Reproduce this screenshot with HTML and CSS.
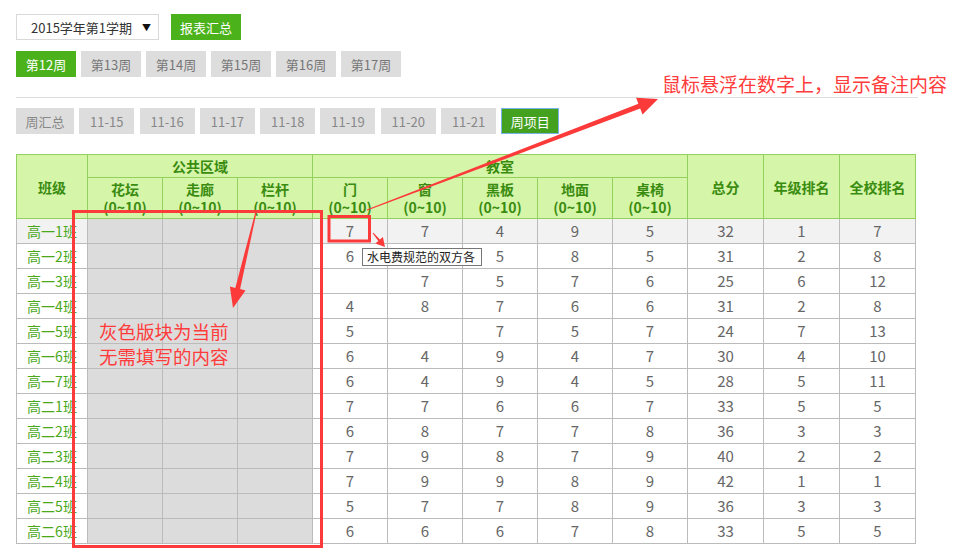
FILE: index.html
```html
<!DOCTYPE html>
<html lang="zh-CN">
<head>
<meta charset="utf-8">
<title>周项目</title>
<link rel="stylesheet" href="styles.css">
</head>
<body>
<div class="page">
  <div class="toolbar">
    <div class="select"><span>2015学年第1学期</span><span class="caret">▼</span></div>
    <button class="btn">报表汇总</button>
  </div>
  <div class="tabs weeks">
    <span class="tab active">第12周</span>
    <span class="tab">第13周</span>
    <span class="tab">第14周</span>
    <span class="tab">第15周</span>
    <span class="tab">第16周</span>
    <span class="tab">第17周</span>
  </div>
  <div class="divider"></div>
  <div class="tabs days">
    <span class="tab wide">周汇总</span>
    <span class="tab">11-15</span>
    <span class="tab">11-16</span>
    <span class="tab">11-17</span>
    <span class="tab">11-18</span>
    <span class="tab">11-19</span>
    <span class="tab">11-20</span>
    <span class="tab">11-21</span>
    <span class="tab wide current">周项目</span>
  </div>

  <table class="score">
    <colgroup>
      <col class="c-name">
      <col><col><col><col><col><col><col><col>
      <col class="c-sum"><col class="c-sum"><col class="c-sum">
    </colgroup>
    <thead>
      <tr class="h1">
        <th rowspan="2">班级</th>
        <th colspan="3">公共区域</th>
        <th colspan="5">教室</th>
        <th rowspan="2">总分</th>
        <th rowspan="2">年级排名</th>
        <th rowspan="2">全校排名</th>
      </tr>
      <tr class="h2">
        <th>花坛<br>(0~10)</th>
        <th>走廊<br>(0~10)</th>
        <th>栏杆<br>(0~10)</th>
        <th>门<br>(0~10)</th>
        <th>窗<br>(0~10)</th>
        <th>黑板<br>(0~10)</th>
        <th>地面<br>(0~10)</th>
        <th>桌椅<br>(0~10)</th>
      </tr>
    </thead>
    <tbody>
      <tr class="hover"><td class="name">高一1班</td><td class="off"></td><td class="off"></td><td class="off"></td><td>7</td><td>7</td><td>4</td><td>9</td><td>5</td><td>32</td><td>1</td><td>7</td></tr>
      <tr><td class="name">高一2班</td><td class="off"></td><td class="off"></td><td class="off"></td><td>6</td><td>7</td><td>5</td><td>8</td><td>5</td><td>31</td><td>2</td><td>8</td></tr>
      <tr><td class="name">高一3班</td><td class="off"></td><td class="off"></td><td class="off"></td><td></td><td>7</td><td>5</td><td>7</td><td>6</td><td>25</td><td>6</td><td>12</td></tr>
      <tr><td class="name">高一4班</td><td class="off"></td><td class="off"></td><td class="off"></td><td>4</td><td>8</td><td>7</td><td>6</td><td>6</td><td>31</td><td>2</td><td>8</td></tr>
      <tr><td class="name">高一5班</td><td class="off"></td><td class="off"></td><td class="off"></td><td>5</td><td></td><td>7</td><td>5</td><td>7</td><td>24</td><td>7</td><td>13</td></tr>
      <tr><td class="name">高一6班</td><td class="off"></td><td class="off"></td><td class="off"></td><td>6</td><td>4</td><td>9</td><td>4</td><td>7</td><td>30</td><td>4</td><td>10</td></tr>
      <tr><td class="name">高一7班</td><td class="off"></td><td class="off"></td><td class="off"></td><td>6</td><td>4</td><td>9</td><td>4</td><td>5</td><td>28</td><td>5</td><td>11</td></tr>
      <tr><td class="name">高二1班</td><td class="off"></td><td class="off"></td><td class="off"></td><td>7</td><td>7</td><td>6</td><td>6</td><td>7</td><td>33</td><td>5</td><td>5</td></tr>
      <tr><td class="name">高二2班</td><td class="off"></td><td class="off"></td><td class="off"></td><td>6</td><td>8</td><td>7</td><td>7</td><td>8</td><td>36</td><td>3</td><td>3</td></tr>
      <tr><td class="name">高二3班</td><td class="off"></td><td class="off"></td><td class="off"></td><td>7</td><td>9</td><td>8</td><td>7</td><td>9</td><td>40</td><td>2</td><td>2</td></tr>
      <tr><td class="name">高二4班</td><td class="off"></td><td class="off"></td><td class="off"></td><td>7</td><td>9</td><td>9</td><td>8</td><td>9</td><td>42</td><td>1</td><td>1</td></tr>
      <tr><td class="name">高二5班</td><td class="off"></td><td class="off"></td><td class="off"></td><td>5</td><td>7</td><td>7</td><td>8</td><td>9</td><td>36</td><td>3</td><td>3</td></tr>
      <tr><td class="name">高二6班</td><td class="off"></td><td class="off"></td><td class="off"></td><td>6</td><td>6</td><td>6</td><td>7</td><td>8</td><td>33</td><td>5</td><td>5</td></tr>
    </tbody>
  </table>

  <div class="tooltip">水电费规范的双方各</div>

  <svg class="marks" width="973" height="553" viewBox="0 0 973 553" aria-hidden="true">
    <rect x="73.5" y="211.5" width="248" height="335" fill="none" stroke="#fc3a3a" stroke-width="3"/>
    <rect x="329" y="216.5" width="40.5" height="24.5" fill="none" stroke="#fc3a3a" stroke-width="3"/>
    <polygon fill="#fc3a3a" points="367.2,210.6 640.2,108.4 642.5,114.5 658,99 636.1,97.7 638.4,103.8 366.8,209.4"/>
    <polygon fill="#fc3a3a" points="256.6,212.1 240.1,289.1 245.5,290.4 233,308 229.9,286.6 235.3,287.9 255.4,211.9"/>
    <polygon fill="#fc3a3a" points="373.4,232.7 379.9,239.5 382.9,236.9 385,247 375.3,243.5 378.3,240.9 372.6,233.3"/>
  </svg>

  <div class="note note-hover">鼠标悬浮在数字上，显示备注内容</div>
  <div class="note note-gray">灰色版块为当前<br>无需填写的内容</div>
</div>
</body>
</html>
```

FILE: styles.css
```css
html, body {
  margin: 0;
  padding: 0;
  background: #fff;
}

body {
  font-family: "Noto Sans CJK SC", "Noto Sans", sans-serif;
  width: 973px;
  height: 553px;
  overflow: hidden;
}

.page {
  position: relative;
  padding: 14px 16px 0;
  height: 553px;
  box-sizing: border-box;
}

.toolbar {
  display: flex;
  gap: 12px;
  height: 26px;
}

.select {
  width: 143px;
  height: 26px;
  box-sizing: border-box;
  border: 1px solid #d9d9d9;
  display: flex;
  align-items: center;
  justify-content: space-between;
  padding: 0 7px 0 14px;
  font-size: 13px;
  line-height: 1;
  color: #333;
}

.caret {
  font-size: 9px;
  color: #111;
}

.btn {
  width: 70px;
  height: 26px;
  border: 0;
  padding: 0;
  background: #4cb21c;
  color: #fff;
  font-family: inherit;
  font-size: 13px;
  line-height: 1;
}

.tabs {
  display: flex;
}

.weeks {
  margin-top: 11px;
  gap: 5px;
}

.tab {
  height: 26px;
  box-sizing: border-box;
  display: flex;
  align-items: center;
  justify-content: center;
  background: #dddddd;
  color: #777;
  font-size: 13px;
  line-height: 1;
}

.weeks .tab {
  width: 60px;
}

.tab.active {
  background: #4cb21c;
  color: #fff;
}

.divider {
  margin-top: 20px;
  width: 902px;
  height: 1px;
  background: #dddddd;
}

.days {
  margin-top: 10px;
  gap: 5.3px;
}

.days .tab {
  width: 55px;
  color: #888;
}

.days .tab.wide {
  width: 58px;
}

.days .tab.current {
  background: #44a01f;
  color: #fff;
  border: 1px solid #7ab3e8;
}

/* table */
.score {
  margin-top: 20px;
  border-collapse: collapse;
  table-layout: fixed;
  width: 899px;
}

.score col {
  width: 75px;
}

.score col.c-name {
  width: 71px;
}

.score col.c-sum {
  width: 76px;
}

.score th {
  background: #d5f5a8;
  border: 1px solid #93d05d;
  color: #3a8c10;
  font-size: 14px;
  font-weight: bold;
  line-height: 18px;
  padding: 0;
  text-align: center;
}

.score .h1 th {
  height: 22px;
}

.score .h2 th {
  height: 40px;
}

.score td {
  border: 1px solid #bbbbbb;
  height: 24px;
  padding: 0;
  text-align: center;
  font-size: 15px;
  line-height: 18px;
  color: #666;
}

.score td.name {
  color: #4aa81a;
  font-size: 14px;
}

.score tr.hover td {
  background: #f2f2f2;
}

.score td.off,
.score tr.hover td.off {
  background: #dcdcdc;
}

/* overlays */
.tooltip {
  position: absolute;
  left: 362px;
  top: 248px;
  width: 120px;
  height: 18px;
  box-sizing: border-box;
  border: 1px solid #767676;
  background: #fff;
  color: #222;
  font-size: 12px;
  line-height: 16px;
  padding-left: 4px;
  white-space: nowrap;
}

.marks {
  position: absolute;
  left: 0;
  top: 0;
  pointer-events: none;
}

.note {
  position: absolute;
  color: #ff3b3b;
  white-space: nowrap;
}

.note-hover {
  left: 662px;
  top: 72px;
  font-size: 19px;
  line-height: 24px;
}

.note-gray {
  left: 99px;
  top: 319px;
  font-size: 18.5px;
  line-height: 25px;
}
```
